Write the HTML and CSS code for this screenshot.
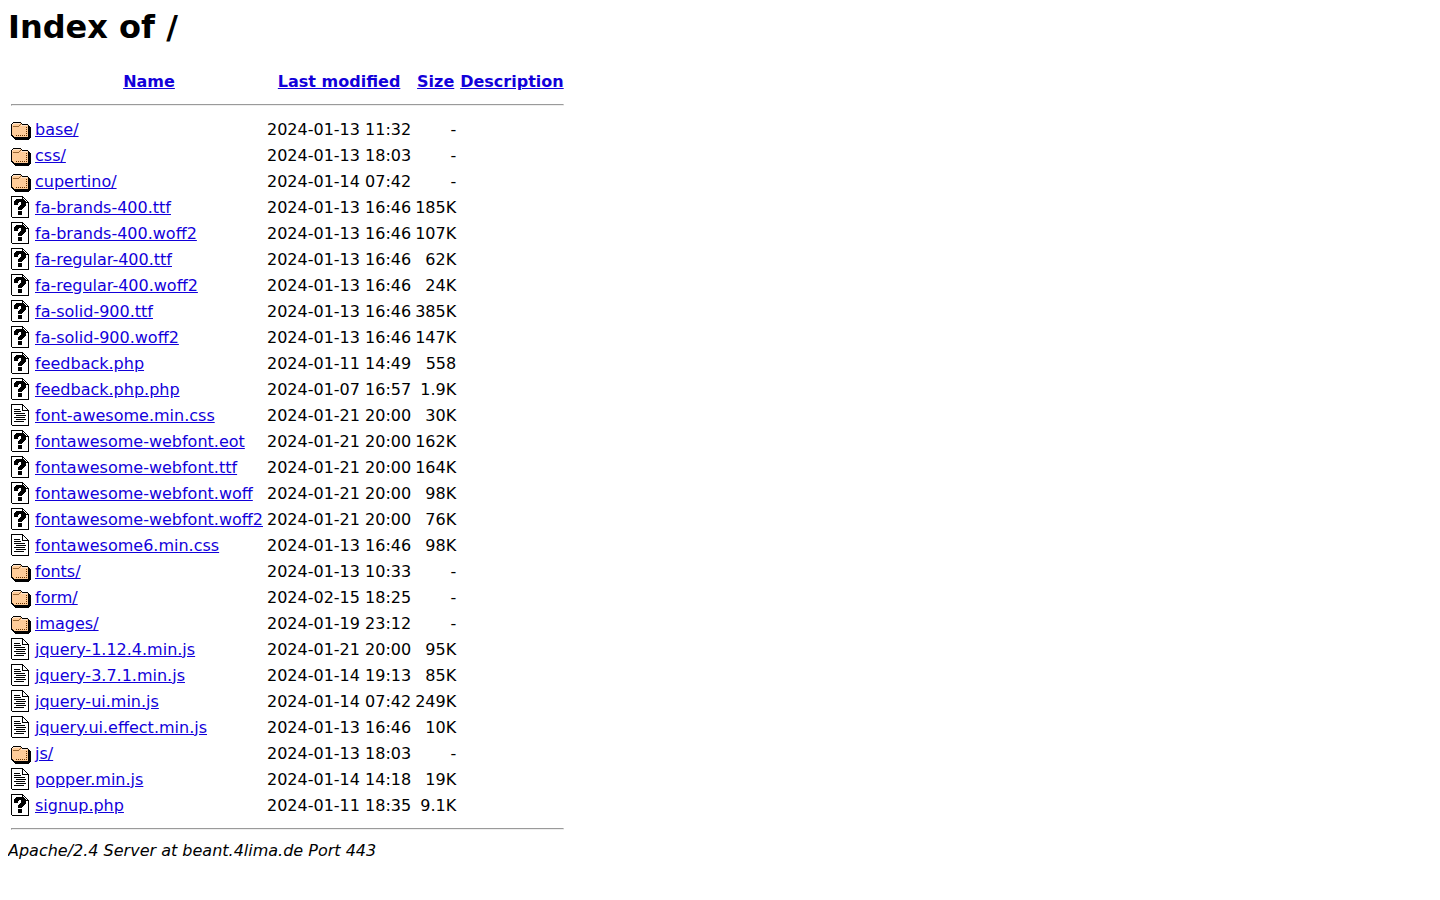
FILE: index.html
```
<!DOCTYPE html>
<html lang="en">
  <head>
    <meta charset="UTF-8" />
    <title>Index of /</title>
    <link rel="stylesheet" href="styles.css">
  </head>
  <body>
    <svg class="sprite" aria-hidden="true">
      <symbol id="folder" viewBox="0 0 20 22">
        <path fill="#000" d="M2 4h8v1h1v1h6v1h1v1h1v1h1v11h-1v1h-1v1H4v-1H3v-1H2v-1H1v-1H0V6h1V5h1z"/>
        <path fill="#fc9" d="M2 5h8v1h1v1h6v12H3v-1H2v-1H1V6h1z"/>
        <path fill="#ffe5cc" d="M2 5h7v1H2zM1 6h1v1H1zM10 7h6v1h-6z"/>
        <path fill="#963" d="M2 8h6v1H2zM8 7h1v1H8zM9 6h1v1H9z"/>
        <path fill="#630" d="M15 9h1v1h-1zM15 11h1v1h-1zM15 13h1v1h-1zM15 15h1v1h-1zM15 17h1v1h-1zM13 17h1v1h-1zM11 17h1v1h-1zM9 17h1v1H9zM7 17h1v1H7zM5 17h1v1H5z"/>
      </symbol>
      <symbol id="page" viewBox="0 0 20 22">
        <path fill="#000" d="M0 0h12v1h1v1h1v1h1v1h1v1h1v1h1v16H1v-1H0z"/>
        <path fill="#fff" d="M1 1h10v6h6v14H1z"/>
        <path fill="#fff" d="M12 2h1v1h1v1h1v1h1v1h-4z"/>
      </symbol>
      <symbol id="text" viewBox="0 0 20 22">
        <use href="#page"/>
        <path fill="#000" d="M3 5h6v1H3zM3 7h7v1H3zM3 9h11v1H3zM5 11h10v1H5zM3 13h11v1H3zM5 15h10v1H5zM3 17h10v1H3z"/>
      </symbol>
      <symbol id="unknown" viewBox="0 0 20 22">
        <use href="#page"/>
        <path fill="#000" d="M5 3h8v1h1v1h1v5h-1v1h-1v1h-1v1h-1v1H7v-3h1v-1h1V9h1V6H8v1H7v2H3V5h1V4h1zM7 15h4v4H7z"/>
      </symbol>
    </svg>

    <h1>Index of /</h1>
    <table>
      <tr><th><span class="icon"></span></th><th><a href="?C=N;O=D">Name</a></th><th><a href="?C=M;O=A">Last modified</a></th><th><a href="?C=S;O=A">Size</a></th><th><a href="?C=D;O=A">Description</a></th></tr>
      <tr><th colspan="5"><hr></th></tr>
      <tr><td><svg class="icon"><use href="#folder"/></svg></td><td><a href="base/">base/</a></td><td class="num">2024-01-13 11:32</td><td class="num">-</td><td></td></tr>
      <tr><td><svg class="icon"><use href="#folder"/></svg></td><td><a href="css/">css/</a></td><td class="num">2024-01-13 18:03</td><td class="num">-</td><td></td></tr>
      <tr><td><svg class="icon"><use href="#folder"/></svg></td><td><a href="cupertino/">cupertino/</a></td><td class="num">2024-01-14 07:42</td><td class="num">-</td><td></td></tr>
      <tr><td><svg class="icon"><use href="#unknown"/></svg></td><td><a href="fa-brands-400.ttf">fa-brands-400.ttf</a></td><td class="num">2024-01-13 16:46</td><td class="num">185K</td><td></td></tr>
      <tr><td><svg class="icon"><use href="#unknown"/></svg></td><td><a href="fa-brands-400.woff2">fa-brands-400.woff2</a></td><td class="num">2024-01-13 16:46</td><td class="num">107K</td><td></td></tr>
      <tr><td><svg class="icon"><use href="#unknown"/></svg></td><td><a href="fa-regular-400.ttf">fa-regular-400.ttf</a></td><td class="num">2024-01-13 16:46</td><td class="num">62K</td><td></td></tr>
      <tr><td><svg class="icon"><use href="#unknown"/></svg></td><td><a href="fa-regular-400.woff2">fa-regular-400.woff2</a></td><td class="num">2024-01-13 16:46</td><td class="num">24K</td><td></td></tr>
      <tr><td><svg class="icon"><use href="#unknown"/></svg></td><td><a href="fa-solid-900.ttf">fa-solid-900.ttf</a></td><td class="num">2024-01-13 16:46</td><td class="num">385K</td><td></td></tr>
      <tr><td><svg class="icon"><use href="#unknown"/></svg></td><td><a href="fa-solid-900.woff2">fa-solid-900.woff2</a></td><td class="num">2024-01-13 16:46</td><td class="num">147K</td><td></td></tr>
      <tr><td><svg class="icon"><use href="#unknown"/></svg></td><td><a href="feedback.php">feedback.php</a></td><td class="num">2024-01-11 14:49</td><td class="num">558</td><td></td></tr>
      <tr><td><svg class="icon"><use href="#unknown"/></svg></td><td><a href="feedback.php.php">feedback.php.php</a></td><td class="num">2024-01-07 16:57</td><td class="num">1.9K</td><td></td></tr>
      <tr><td><svg class="icon"><use href="#text"/></svg></td><td><a href="font-awesome.min.css">font-awesome.min.css</a></td><td class="num">2024-01-21 20:00</td><td class="num">30K</td><td></td></tr>
      <tr><td><svg class="icon"><use href="#unknown"/></svg></td><td><a href="fontawesome-webfont.eot">fontawesome-webfont.eot</a></td><td class="num">2024-01-21 20:00</td><td class="num">162K</td><td></td></tr>
      <tr><td><svg class="icon"><use href="#unknown"/></svg></td><td><a href="fontawesome-webfont.ttf">fontawesome-webfont.ttf</a></td><td class="num">2024-01-21 20:00</td><td class="num">164K</td><td></td></tr>
      <tr><td><svg class="icon"><use href="#unknown"/></svg></td><td><a href="fontawesome-webfont.woff">fontawesome-webfont.woff</a></td><td class="num">2024-01-21 20:00</td><td class="num">98K</td><td></td></tr>
      <tr><td><svg class="icon"><use href="#unknown"/></svg></td><td><a href="fontawesome-webfont.woff2">fontawesome-webfont.woff2</a></td><td class="num">2024-01-21 20:00</td><td class="num">76K</td><td></td></tr>
      <tr><td><svg class="icon"><use href="#text"/></svg></td><td><a href="fontawesome6.min.css">fontawesome6.min.css</a></td><td class="num">2024-01-13 16:46</td><td class="num">98K</td><td></td></tr>
      <tr><td><svg class="icon"><use href="#folder"/></svg></td><td><a href="fonts/">fonts/</a></td><td class="num">2024-01-13 10:33</td><td class="num">-</td><td></td></tr>
      <tr><td><svg class="icon"><use href="#folder"/></svg></td><td><a href="form/">form/</a></td><td class="num">2024-02-15 18:25</td><td class="num">-</td><td></td></tr>
      <tr><td><svg class="icon"><use href="#folder"/></svg></td><td><a href="images/">images/</a></td><td class="num">2024-01-19 23:12</td><td class="num">-</td><td></td></tr>
      <tr><td><svg class="icon"><use href="#text"/></svg></td><td><a href="jquery-1.12.4.min.js">jquery-1.12.4.min.js</a></td><td class="num">2024-01-21 20:00</td><td class="num">95K</td><td></td></tr>
      <tr><td><svg class="icon"><use href="#text"/></svg></td><td><a href="jquery-3.7.1.min.js">jquery-3.7.1.min.js</a></td><td class="num">2024-01-14 19:13</td><td class="num">85K</td><td></td></tr>
      <tr><td><svg class="icon"><use href="#text"/></svg></td><td><a href="jquery-ui.min.js">jquery-ui.min.js</a></td><td class="num">2024-01-14 07:42</td><td class="num">249K</td><td></td></tr>
      <tr><td><svg class="icon"><use href="#text"/></svg></td><td><a href="jquery.ui.effect.min.js">jquery.ui.effect.min.js</a></td><td class="num">2024-01-13 16:46</td><td class="num">10K</td><td></td></tr>
      <tr><td><svg class="icon"><use href="#folder"/></svg></td><td><a href="js/">js/</a></td><td class="num">2024-01-13 18:03</td><td class="num">-</td><td></td></tr>
      <tr><td><svg class="icon"><use href="#text"/></svg></td><td><a href="popper.min.js">popper.min.js</a></td><td class="num">2024-01-14 14:18</td><td class="num">19K</td><td></td></tr>
      <tr><td><svg class="icon"><use href="#unknown"/></svg></td><td><a href="signup.php">signup.php</a></td><td class="num">2024-01-11 18:35</td><td class="num">9.1K</td><td></td></tr>
      <tr><th colspan="5"><hr></th></tr>
    </table>
    <address>Apache/2.4 Server at beant.4lima.de Port 443</address>
  </body>
</html>
```
FILE: styles.css
```
body{
    margin: 8px;
    font-family: "DejaVu Sans", sans-serif;
    font-size: 16px;
    color: #000;
    background-color: #fff;
}
h1{
    margin: 0 0 21px;
    font-size: 32px;
}
table{
    border-spacing: 2px;
}
th,
td{
    padding: 1px;
    white-space: nowrap;
}
hr{
    margin: 8px 0;
}
a{
    color: #1200da;
}
.num{
    text-align: right;
}
.sprite{
    display: none;
}
.icon{
    display: block;
    width: 20px;
    height: 22px;
    shape-rendering: crispEdges;
}
```
